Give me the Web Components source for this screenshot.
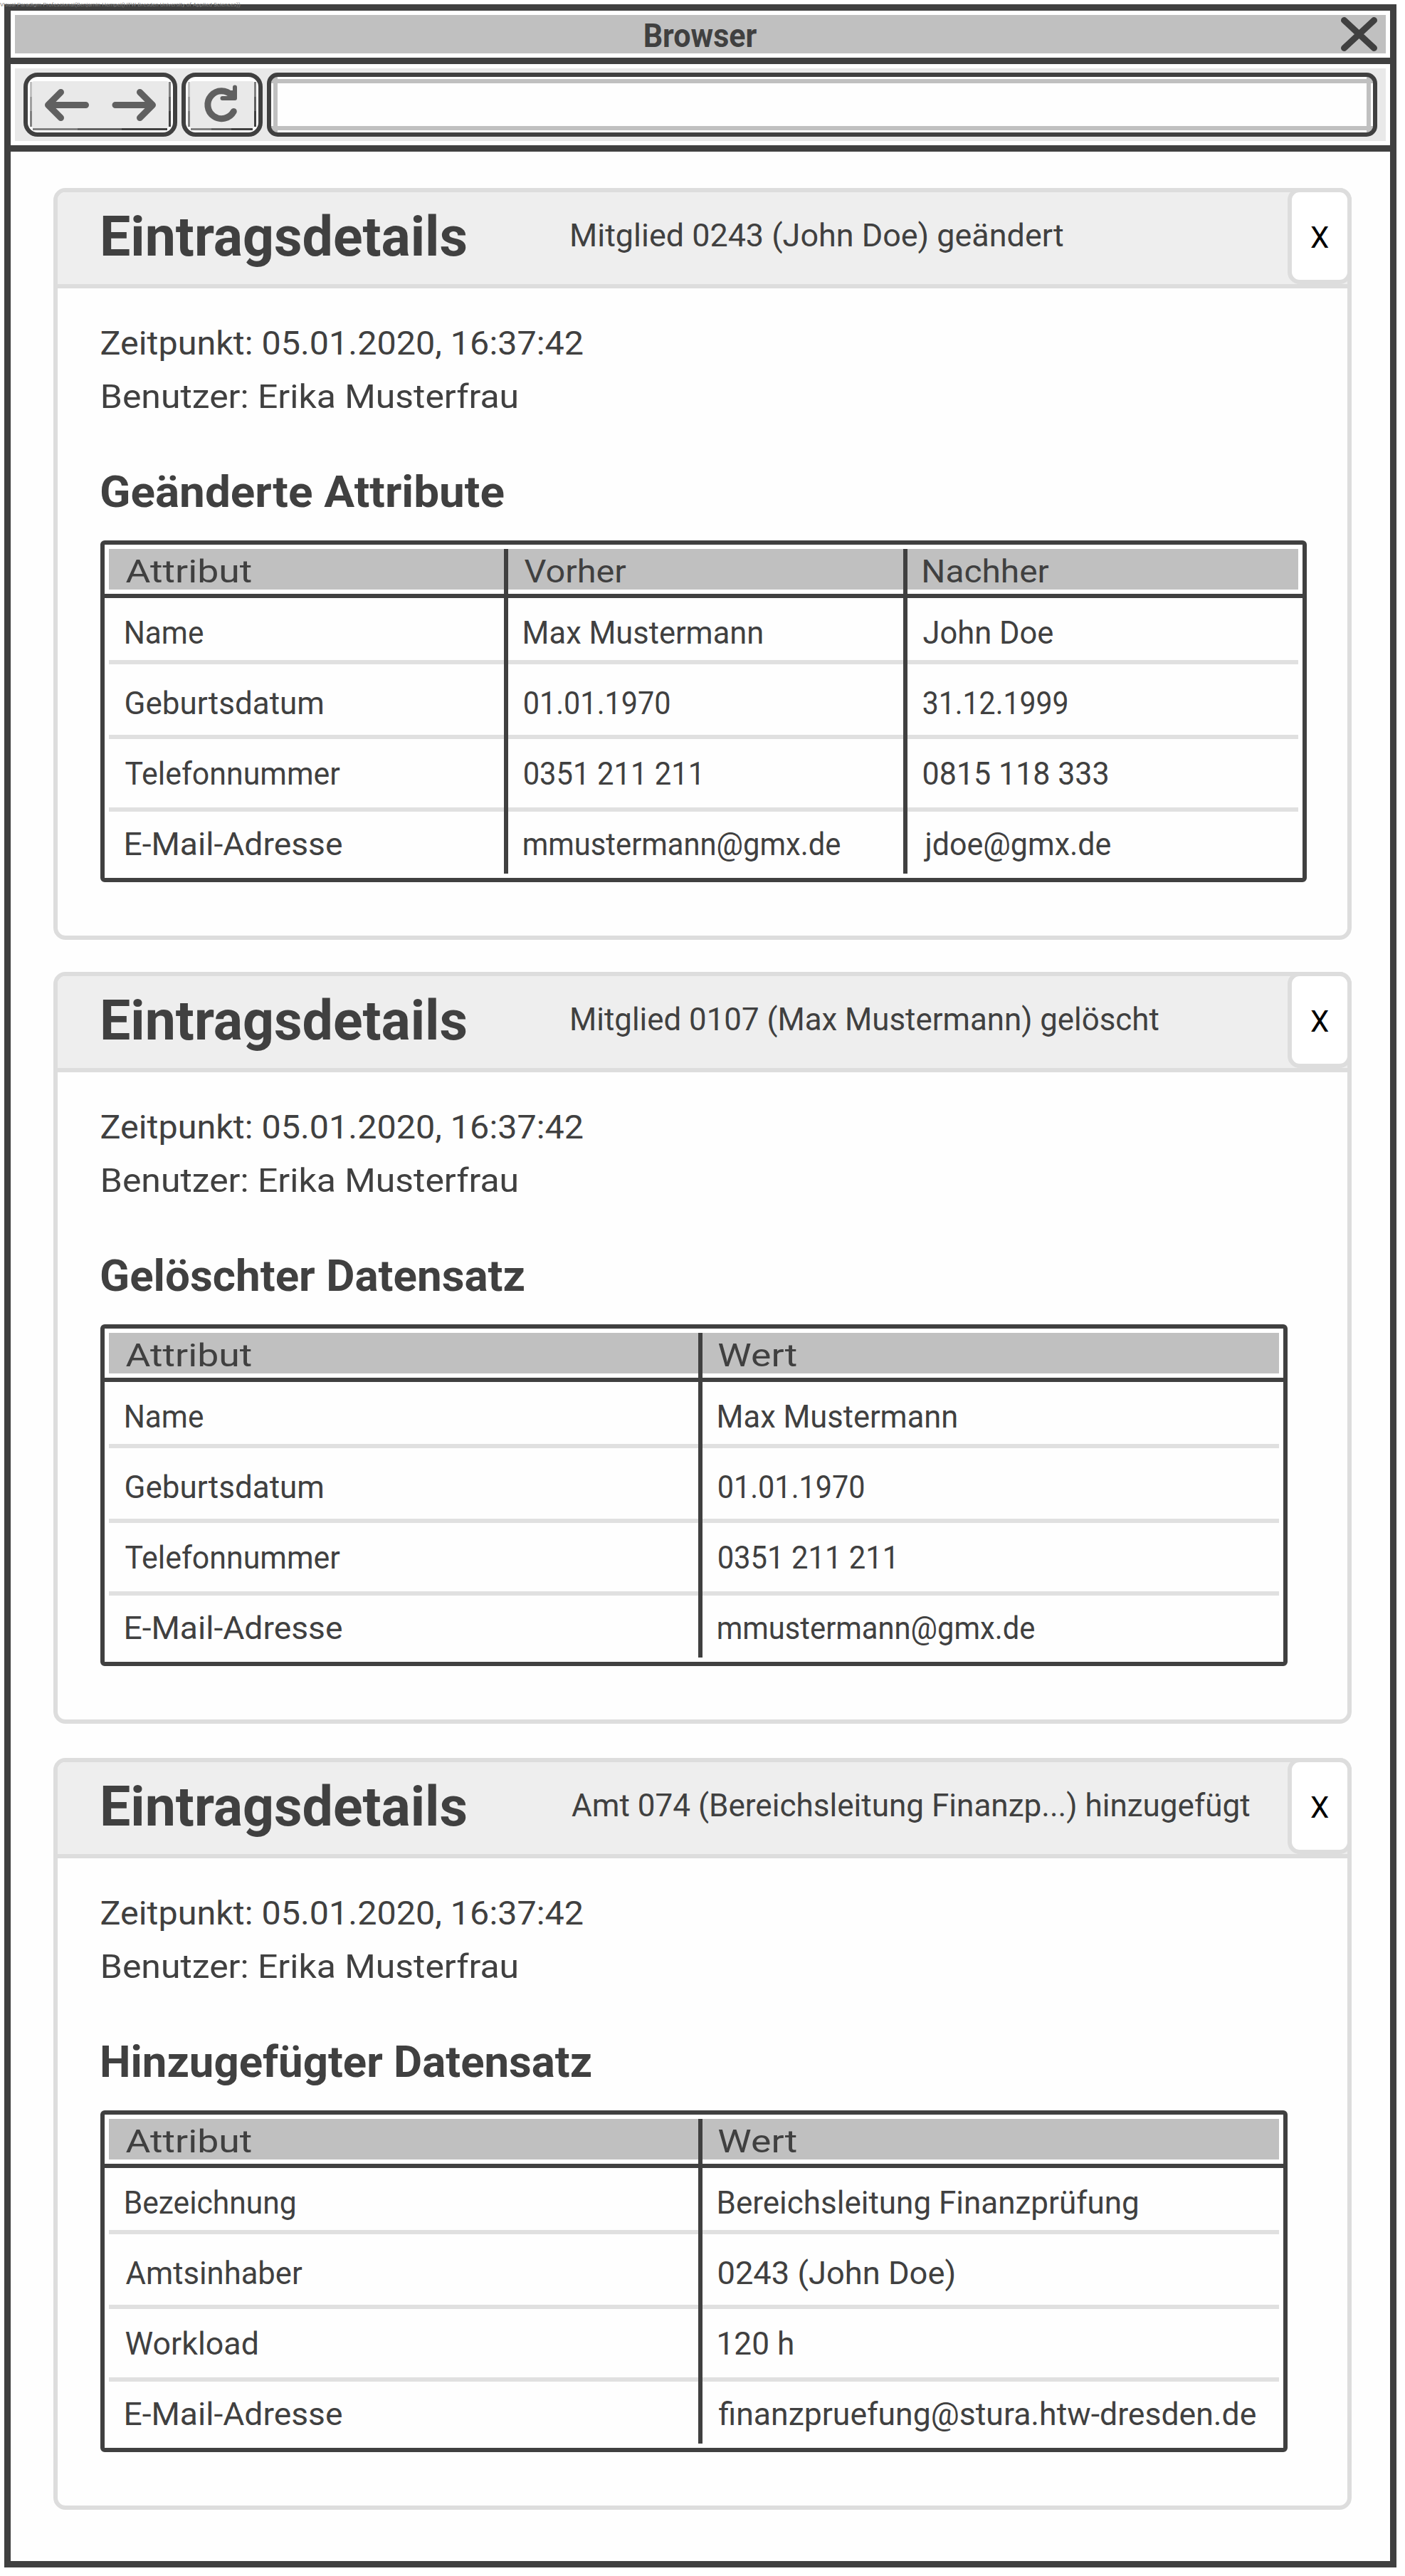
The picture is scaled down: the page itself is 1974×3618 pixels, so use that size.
<!DOCTYPE html>
<html lang="de">
<head>
<meta charset="utf-8">
<title>Browser</title>
<style>
  html, body { margin: 0; background: #fff; }
  body { width: 1974px; height: 3618px; overflow: hidden; font-family: Roboto, "Open Sans", sans-serif; color: #404040; }
</style>
</head>
<body>
<page-mark></page-mark>
<browser-window caption="Browser">
  <entry-card subject="Mitglied 0243 (John Doe) geändert" subject-width="691">
    <fit-text class="meta" start="61.5" ink="676">Zeitpunkt: 05.01.2020, 16:37:42</fit-text>
    <fit-text class="meta" start="63" ink="582">Benutzer: Erika Musterfrau</fit-text>
    <fit-text slot="heading" start="61" ink="566">Geänderte Attribute</fit-text>
    <data-grid slot="table" columns="555 561 555" rows='[
      [["Attribut",177],["Vorher",143],["Nachher",176]],
      [["Name",109],["Max Mustermann",334],["John Doe",182]],
      [["Geburtsdatum",277],["01.01.1970",204],["31.12.1999",202]],
      [["Telefonnummer",301],["0351 211 211",246],["0815 118 333",259]],
      [["E-Mail-Adresse",304],["mmustermann@gmx.de",444],["jdoe@gmx.de",263]]]'></data-grid>
  </entry-card>
  <entry-card subject="Mitglied 0107 (Max Mustermann) gelöscht" subject-width="825">
    <fit-text class="meta" start="61.5" ink="676">Zeitpunkt: 05.01.2020, 16:37:42</fit-text>
    <fit-text class="meta" start="63" ink="582">Benutzer: Erika Musterfrau</fit-text>
    <fit-text slot="heading" start="61" ink="594">Gelöschter Datensatz</fit-text>
    <data-grid slot="table" columns="828 816" rows='[
      [["Attribut",177],["Wert",110]],
      [["Name",109],["Max Mustermann",334]],
      [["Geburtsdatum",277],["01.01.1970",204]],
      [["Telefonnummer",301],["0351 211 211",246]],
      [["E-Mail-Adresse",304],["mmustermann@gmx.de",444]]]'></data-grid>
  </entry-card>
  <entry-card class="last" subject="Amt 074 (Bereichsleitung Finanzp...) hinzugefügt" subject-width="953">
    <fit-text class="meta" start="61.5" ink="676">Zeitpunkt: 05.01.2020, 16:37:42</fit-text>
    <fit-text class="meta" start="63" ink="582">Benutzer: Erika Musterfrau</fit-text>
    <fit-text slot="heading" start="62" ink="687">Hinzugefügter Datensatz</fit-text>
    <data-grid slot="table" columns="828 816" rows='[
      [["Attribut",177],["Wert",110]],
      [["Bezeichnung",238],["Bereichsleitung Finanzprüfung",589]],
      [["Amtsinhaber",248],["0243 (John Doe)",331]],
      [["Workload",185],["120 h",104]],
      [["E-Mail-Adresse",304],["finanzpruefung@stura.htw-dresden.de",755]]]'></data-grid>
  </entry-card>
</browser-window>

<script>
const shadow = (el, html) => { const r = el.attachShadow({ mode: 'open' }); r.innerHTML = html; return r; };
const pen = document.createElement('canvas').getContext('2d');

// One line of text, stretched so that its ink starts at `start` and spans `ink` pixels.
class FitText extends HTMLElement {
  connectedCallback() {
    if (this.shadowRoot) return;
    const root = shadow(this, `
      <style>
        :host { display: block; white-space: nowrap; }
        span { display: inline-block; transform-origin: 0 50%; line-height: inherit; }
      </style><span><slot></slot></span>`);
    const cs = getComputedStyle(this);
    pen.font = `${cs.fontWeight} ${cs.fontSize} ${cs.fontFamily}`;
    const m = pen.measureText(this.textContent);
    const s = Number(this.getAttribute('ink')) / (m.actualBoundingBoxLeft + m.actualBoundingBoxRight);
    const x = Number(this.getAttribute('start')) + m.actualBoundingBoxLeft * s;
    root.querySelector('span').style.transform = `translateX(${x.toFixed(2)}px) scaleX(${s.toFixed(4)})`;
  }
}

class PageMark extends HTMLElement {
  connectedCallback() {
    shadow(this, `
      <style>
        :host { position: absolute; left: 0; top: 1px; z-index: 2; color: #808080; font-size: 8px; line-height: 12px; }
      </style>
      <fit-text start="0" ink="338">Visual Paradigm Professional(Benjamin Hempel(HTW Dresden University of Applied Sciences))</fit-text>`);
  }
}

class NavButtons extends HTMLElement {
  connectedCallback() {
    shadow(this, `
      <style>:host { display: block; width: 216px; height: 90px; } svg { display: block; }</style>
      <svg width="216" height="90" viewBox="0 0 216 90" fill="none">
        <rect x="3" y="3" width="210" height="84" rx="17" fill="#fff" stroke="#404040" stroke-width="6"/>
        <rect x="12" y="12" width="192" height="66" rx="3" fill="#e9e9e9"/>
        <path d="M10.5 13v21" stroke="#c0c0c0" stroke-width="3"/>
        <path d="M10.5 34v20" stroke="#a0a0a0" stroke-width="3"/>
        <path d="M10.5 54v22" stroke="#808080" stroke-width="3"/>
        <path d="M205.5 13v21" stroke="#808080" stroke-width="3"/>
        <path d="M205.5 34v20" stroke="#606060" stroke-width="3"/>
        <path d="M205.5 54v22" stroke="#404040" stroke-width="3"/>
        <path d="M13 79.5h63" stroke="#808080" stroke-width="3"/>
        <path d="M76 79.5h62" stroke="#606060" stroke-width="3"/>
        <path d="M138 79.5h64" stroke="#404040" stroke-width="3"/>
        <g stroke="#606060" stroke-width="9" stroke-linecap="round" stroke-linejoin="round">
          <path d="M52.5 27.5 34.5 45.5 52.5 63.5M34.5 45.5H87.5"/>
          <path d="M163.5 27.5 181.500 45.5 163.5 63.5M181.5 45.5H129"/>
        </g>
      </svg>`);
  }
}

class ReloadButton extends HTMLElement {
  connectedCallback() {
    shadow(this, `
      <style>:host { display: block; width: 114px; height: 90px; } svg { display: block; }</style>
      <svg width="114" height="90" viewBox="0 0 114 90" fill="none">
        <rect x="3" y="3" width="108" height="84" rx="17" fill="#fff" stroke="#404040" stroke-width="6"/>
        <rect x="12" y="12" width="90" height="66" rx="3" fill="#e9e9e9"/>
        <path d="M10.5 13v21" stroke="#c0c0c0" stroke-width="3"/>
        <path d="M10.5 34v20" stroke="#a0a0a0" stroke-width="3"/>
        <path d="M10.5 54v22" stroke="#808080" stroke-width="3"/>
        <path d="M103.5 13v21" stroke="#808080" stroke-width="3"/>
        <path d="M103.5 34v20" stroke="#606060" stroke-width="3"/>
        <path d="M103.5 54v22" stroke="#404040" stroke-width="3"/>
        <path d="M13 79.5h29" stroke="#808080" stroke-width="3"/>
        <path d="M42 79.5h28" stroke="#606060" stroke-width="3"/>
        <path d="M70 79.5h30" stroke="#404040" stroke-width="3"/>
        <g stroke="#606060" stroke-linecap="round" stroke-linejoin="round">
          <path stroke-width="9" d="M73.3 54.5A19.4 19.4 0 1 1 70.5 32"/>
          <path stroke-width="6" d="M75 20.5V36H57.5"/>
        </g>
        <path fill="#606060" d="M66 25 77 25V37H65Z"/>
      </svg>`);
  }
}

class AddressField extends HTMLElement {
  connectedCallback() {
    shadow(this, `
      <style>
        :host {
          display: block; flex: 1; box-sizing: border-box; height: 90px;
          border: 6px solid #404040; border-radius: 15px;
          background:
            linear-gradient(#c0c0c0, #c0c0c0) 0 3px / 100% 6px no-repeat,
            linear-gradient(#c0c0c0, #c0c0c0) 0 69px / 100% 6px no-repeat,
            linear-gradient(#c0c0c0, #c0c0c0) 3px 0 / 6px 100% no-repeat,
            linear-gradient(#c0c0c0, #c0c0c0) 1539px 0 / 6px 100% no-repeat,
            #fefefe;
          background-origin: padding-box; background-clip: padding-box;
        }
      </style>`);
  }
}

class BrowserWindow extends HTMLElement {
  connectedCallback() {
    shadow(this, `
      <style>
        :host { display: flow-root; }
        .frame { box-sizing: border-box; width: 1956px; height: 3600px; margin: 6px; border: 9px solid #404040; background: #fefefe; }
        .bar { border: 6px solid #fff; }
        .caption { display: flex; height: 54px; background: #c0c0c0; font-weight: 700; font-size: 46px; line-height: 58px; }
        .caption fit-text { flex: 1; }
        .caption svg { margin-right: 12px; }
        .rule { height: 9px; background: #404040; }
        .tools { box-sizing: border-box; display: flex; gap: 6px; height: 102px; padding: 6px 12px; background: #e9e9e9; }
        .content { padding: 51px 54px 0 60px; }
      </style>
      <div class="frame">
        <div class="bar"><div class="caption">
          <fit-text start="884.5" ink="158">${this.getAttribute('caption')}</fit-text>
          <svg width="51" height="54" viewBox="0 0 51 54"><path d="M4.5 7.5 46.5 46.5M46.5 7.5 4.5 46.5" stroke="#404040" stroke-width="9" stroke-linecap="round"/></svg>
        </div></div>
        <div class="rule"></div>
        <div class="bar"><div class="tools">
          <nav-buttons></nav-buttons><reload-button></reload-button><address-field></address-field>
        </div></div>
        <div class="rule"></div>
        <div class="content"><slot></slot></div>
      </div>`);
  }
}

class EntryCard extends HTMLElement {
  connectedCallback() {
    shadow(this, `
      <style>
        :host { display: block; box-sizing: border-box; width: 1824px; height: 1056px; margin-bottom: 45px; border: 6px solid #ddd; border-radius: 17px; background: #fefefe; }
        :host(.last) { margin-top: 48px; }
        header { display: flex; height: 129px; background: #eee; border-bottom: 6px solid #ddd; border-radius: 11px 11px 0 0; }
        .title { width: 700px; font-weight: 700; font-size: 78px; line-height: 126px; }
        .subject { flex: 1; font-size: 45px; line-height: 122px; }
        .close { box-sizing: border-box; width: 90px; height: 135px; margin: -6px -6px 0 0; border: 6px solid #ddd; border-radius: 17px; background: #fff; color: #000; font-size: 42px; line-height: 127px; }
        .meta { padding-top: 39px; font-size: 47px; line-height: 75px; }
        .heading { padding-top: 60px; font-weight: 700; font-size: 61px; line-height: 74px; }
        .table { padding: 31px 0 0 60px; }
      </style>
      <header>
        <fit-text class="title" start="63" ink="511">Eintragsdetails</fit-text>
        <fit-text class="subject" start="22" ink="${this.getAttribute('subject-width')}">${this.getAttribute('subject')}</fit-text>
        <div class="close"><fit-text start="27" ink="25">X</fit-text></div>
      </header>
      <div class="meta"><slot></slot></div>
      <div class="heading"><slot name="heading"></slot></div>
      <div class="table"><slot name="table"></slot></div>`);
  }
}

class DataGrid extends HTMLElement {
  connectedCallback() {
    const cols = this.getAttribute('columns').split(' ');
    const rows = JSON.parse(this.getAttribute('rows'));
    const row = (cells) => `<div class="row">${cells.map(([text, ink], i) =>
      `<div class="cell" style="width:${cols[i]}px"><div class="box"><fit-text start="${i ? 22.5 : 23.5}" ink="${ink}">${text}</fit-text></div></div>`).join('')}</div>`;
    shadow(this, `
      <style>
        :host { display: inline-block; vertical-align: top; border: 6px solid #404040; border-radius: 6px; font-size: 45px; line-height: 50px; }
        .row { display: flex; padding: 0 6px; }
        .cell { box-sizing: border-box; }
        .cell + .cell { border-left: 6px solid #404040; }
        .box { box-sizing: border-box; border-bottom: 6px solid #e0e0e0; }
        .row:nth-of-type(1) { padding-top: 6px; border-bottom: 6px solid #404040; background: #fff; }
        .row:nth-of-type(1) .box { height: 63px; padding-top: 7px; border-bottom-color: #fff; background: #c0c0c0; }
        .row:nth-of-type(2) .box { height: 93px; padding-top: 24px; }
        .row:nth-of-type(3) .box { height: 105px; padding-top: 30px; }
        .row:nth-of-type(4) .box { height: 102px; padding-top: 24px; }
        .row:nth-of-type(5) { padding-bottom: 6px; }
        .row:nth-of-type(5) .box { height: 87px; padding-top: 21px; border-bottom: 0; }
      </style>${rows.map(row).join('')}`);
  }
}

customElements.define('browser-window', BrowserWindow);
customElements.define('nav-buttons', NavButtons);
customElements.define('reload-button', ReloadButton);
customElements.define('address-field', AddressField);
customElements.define('entry-card', EntryCard);
customElements.define('data-grid', DataGrid);
customElements.define('page-mark', PageMark);
customElements.define('fit-text', FitText);
</script>
</body>
</html>
